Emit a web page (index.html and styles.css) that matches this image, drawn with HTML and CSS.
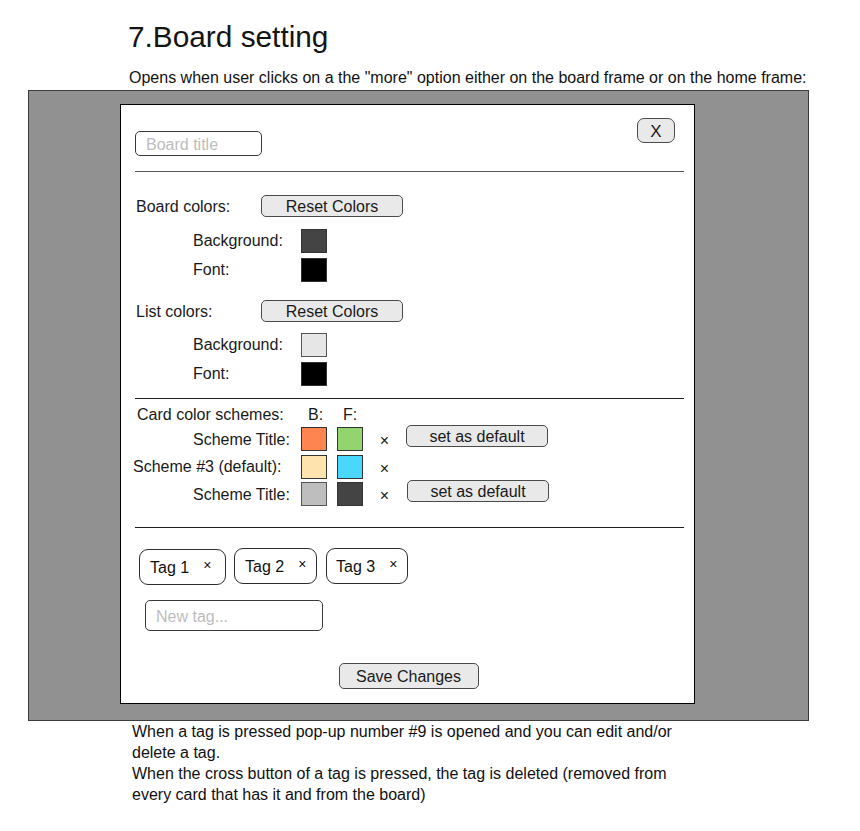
FILE: index.html
```html
<!DOCTYPE html>
<html lang="en">
<head>
<meta charset="utf-8">
<title>7.Board setting</title>
<link rel="stylesheet" href="styles.css">
</head>
<body>
<header class="doc-head">
  <h1 class="doc-title">7.Board setting</h1>
  <p class="doc-lead">Opens when user clicks on a the "more" option either on the board frame or on the home frame:</p>
</header>

<div class="stage">
  <div class="dialog">
    <div class="dlg-head">
      <input class="title-input" type="text" placeholder="Board title">
      <button class="btn btn-close" type="button">X</button>
    </div>
    <div class="rule rule-grey"></div>

    <div class="row row-head">
      <span class="head-label">Board colors:</span>
      <button class="btn btn-reset" type="button">Reset Colors</button>
    </div>
    <div class="row row-sub row-first">
      <span class="sub-label">Background:</span>
      <span class="swatch sw-dark"></span>
    </div>
    <div class="row row-sub">
      <span class="sub-label">Font:</span>
      <span class="swatch sw-black"></span>
    </div>

    <div class="row row-head row-list">
      <span class="head-label">List colors:</span>
      <button class="btn btn-reset" type="button">Reset Colors</button>
    </div>
    <div class="row row-sub row-first row-first-list">
      <span class="sub-label">Background:</span>
      <span class="swatch sw-light"></span>
    </div>
    <div class="row row-sub">
      <span class="sub-label">Font:</span>
      <span class="swatch sw-black"></span>
    </div>

    <div class="rule rule-dark rule-cards"></div>

    <div class="row scheme-head">
      <span class="scheme-caption">Card color schemes:</span>
      <span class="col-label col-b">B:</span>
      <span class="col-label col-f">F:</span>
    </div>
    <div class="row scheme scheme-1">
      <span class="scheme-label indent">Scheme Title:</span>
      <span class="swatch sw-orange"></span>
      <span class="swatch sw-green sw-second"></span>
      <span class="remove">×</span>
      <button class="btn btn-default" type="button">set as default</button>
    </div>
    <div class="row scheme scheme-2">
      <span class="scheme-label outdent">Scheme #3 (default):</span>
      <span class="swatch sw-peach"></span>
      <span class="swatch sw-cyan sw-second"></span>
      <span class="remove">×</span>
    </div>
    <div class="row scheme scheme-3">
      <span class="scheme-label indent">Scheme Title:</span>
      <span class="swatch sw-grey"></span>
      <span class="swatch sw-dark sw-second"></span>
      <span class="remove">×</span>
      <button class="btn btn-default btn-default-2" type="button">set as default</button>
    </div>

    <div class="rule rule-dark rule-tags"></div>

    <div class="tags">
      <span class="tag tag-1">Tag 1<span class="tag-x">×</span></span>
      <span class="tag tag-2">Tag 2<span class="tag-x">×</span></span>
      <span class="tag tag-3">Tag 3<span class="tag-x">×</span></span>
    </div>
    <input class="tag-input" type="text" placeholder="New tag...">

    <div class="dlg-foot">
      <button class="btn btn-save" type="button">Save Changes</button>
    </div>
  </div>
</div>

<div class="notes">
  <p>When a tag is pressed pop-up number #9 is opened and you can edit and/or delete a tag.</p>
  <p>When the cross button of a tag is pressed, the tag is deleted (removed from every card that has it and from the board)</p>
</div>
</body>
</html>
```

FILE: styles.css
```css
* { box-sizing: border-box; }

body {
  margin: 0;
  background: #ffffff;
  color: #111111;
  font-family: "Liberation Sans", Arial, sans-serif;
}

.doc-head {
  padding: 20px 0 0 128px;
}

.doc-title {
  margin: 0;
  font-size: 29.8px;
  font-weight: normal;
  line-height: 34px;
  color: #141414;
}

.doc-lead {
  margin: 15px 0 3px 1px;
  font-size: 16px;
  line-height: 18px;
}

.stage {
  margin-left: 28px;
  width: 781px;
  height: 631px;
  background: #919191;
  border: 1px solid #3c3c3c;
  padding: 13px 0 0 91px;
}

.dialog {
  width: 575px;
  height: 600px;
  background: #ffffff;
  border: 1px solid #000000;
  padding: 0 10px 0 14px;
  display: flex;
  flex-direction: column;
  font-size: 16px;
  color: #1a1a1a;
}

.btn {
  font-family: "Liberation Sans", Arial, sans-serif;
  font-size: 16px;
  color: #1a1a1a;
  background: #e9e9e9;
  border: 1px solid #4a4a4a;
  border-radius: 5px;
  padding: 0;
  line-height: 1;
}

.dlg-head {
  display: flex;
  justify-content: space-between;
  align-items: flex-start;
  margin-top: 13px;
}

.title-input {
  margin-top: 13px;
  width: 127px;
  height: 25px;
  border: 1px solid #3a3a3a;
  border-radius: 5px;
  padding: 2px 0 0 10px;
  font-family: "Liberation Sans", Arial, sans-serif;
  font-size: 16px;
  outline: none;
}

.title-input::placeholder,
.tag-input::placeholder {
  color: #bdbdbd;
}

.btn-close {
  width: 38px;
  height: 25px;
  margin-right: 9px;
  border-radius: 7px;
  font-size: 17px;
  padding-top: 1px;
}

.rule {
  height: 1px;
  flex: none;
}

.rule-grey {
  margin-top: 15px;
  background: #555555;
}

.rule-dark {
  background: #1e1e1e;
}

.row {
  display: flex;
  align-items: center;
  flex: none;
}

.row-head {
  margin-top: 23px;
  height: 22px;
}

.row-list {
  margin-top: 18px;
}

.head-label {
  width: 126px;
  padding: 2px 0 0 1px;
}

.btn-reset {
  width: 142px;
  height: 22px;
  padding-top: 2px;
}

.row-sub {
  margin-top: 5px;
  height: 24px;
  padding-left: 58px;
}

.row-first {
  margin-top: 12px;
}

.row-first-list {
  margin-top: 11px;
}

.sub-label {
  width: 108px;
}

.swatch {
  display: block;
  width: 26px;
  height: 24px;
  border: 1px solid #333333;
  flex: none;
}

.sw-dark { background: #444444; }
.sw-black { background: #000000; }
.sw-light { background: #e6e6e6; border-color: #555555; }
.sw-orange { background: #ff8550; }
.sw-green { background: #93d46e; }
.sw-peach { background: #ffe3af; }
.sw-cyan { background: #4bd6fb; }
.sw-grey { background: #bebebe; border-color: #555555; }

.sw-second {
  margin-left: 10px;
}

.rule-cards {
  margin-top: 12px;
}

.scheme-head {
  margin-top: 8px;
  height: 16px;
}

.scheme-caption {
  width: 166px;
  padding-left: 2px;
}

.col-label {
  width: 36px;
}

.col-b { padding-left: 7px; }
.col-f { padding-left: 6px; }

.scheme {
  height: 26px;
  align-items: flex-end;
}

.scheme-1 { margin-top: 2px; }
.scheme-2 { margin-top: 4px; height: 24px; }
.scheme-3 { margin-top: 1px; }

.scheme-label {
  width: 166px;
  align-self: center;
  position: relative;
  top: 2px;
  white-space: nowrap;
}

.scheme-2 .scheme-label { top: 0; }

.indent { padding-left: 58px; }
.outdent { margin-left: -2px; width: 168px; }

.remove {
  width: 43px;
  text-align: center;
  font-size: 16px;
  align-self: center;
  position: relative;
  top: 3px;
}

.scheme-2 .remove { top: 2px; }

.btn-default {
  width: 142px;
  height: 22px;
  align-self: flex-start;
  padding-top: 1px;
}

.btn-default-2 {
  margin-left: 1px;
}

.rule-tags {
  margin-top: 21px;
}

.tags {
  display: flex;
  align-items: flex-start;
  gap: 8px;
  margin-top: 20px;
  padding-left: 4px;
}

.tag {
  display: flex;
  align-items: center;
  height: 36px;
  border: 1px solid #2e2e2e;
  border-radius: 9px;
  padding: 2px 0 0 10px;
  font-size: 16px;
  color: #111111;
}

.tag-1 { width: 87px; margin-top: 1px; }
.tag-2 { width: 83px; }
.tag-3 { width: 82px; margin-left: 1px; padding-left: 9px; }

.tag-x {
  margin-left: 14px;
  font-size: 14px;
  position: relative;
  top: -3px;
}

.tag-input {
  margin: 15px 0 0 10px;
  width: 178px;
  height: 31px;
  border: 1px solid #3a3a3a;
  border-radius: 5px;
  padding: 2px 0 0 10px;
  font-family: "Liberation Sans", Arial, sans-serif;
  font-size: 16px;
  outline: none;
  flex: none;
}

.dlg-foot {
  display: flex;
  justify-content: center;
  margin-top: 32px;
}

.btn-save {
  width: 140px;
  height: 26px;
  margin-left: -2px;
  padding-top: 1px;
}

.notes {
  padding: 0 0 0 132px;
  width: 700px;
  font-size: 16px;
  line-height: 21px;
  color: #111111;
}

.notes p {
  margin: 0;
}
```
